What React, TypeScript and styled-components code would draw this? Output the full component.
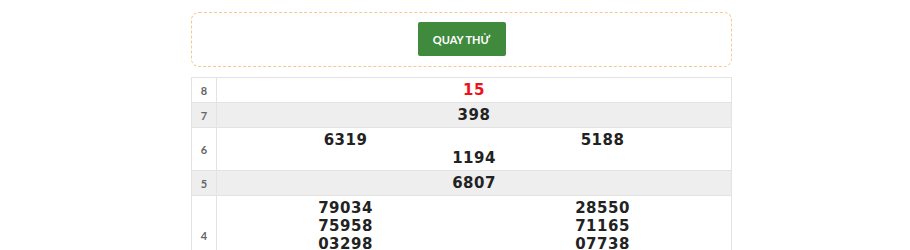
import React from 'react';
import styled, { createGlobalStyle } from 'styled-components';

const GlobalStyle = createGlobalStyle`
  html, body {
    margin: 0;
    padding: 0;
    background: #fff;
    font-family: Lato, "Liberation Sans", Arial, sans-serif;
  }
`;

const Page = styled.div`
  width: 541px;
  padding: 12px 0 0 191px;
`;

const SpinBox = styled.div`
  display: flex;
  justify-content: center;
  padding: 9px 0 10px;
  border: 1px dashed #f3c98c;
  border-radius: 8px;
  margin-bottom: 10px;
`;

const SpinButton = styled.button`
  width: 88px;
  height: 34px;
  border: none;
  border-radius: 2px;
  background: #3f8a3c;
  color: #fff;
  font-family: Lato, "Liberation Sans", Arial, sans-serif;
  font-weight: 700;
  font-size: 11px;
  cursor: pointer;
`;

const Table = styled.table`
  width: 100%;
  border-collapse: collapse;
  table-layout: fixed;
  border: 1px solid #e3e3e3;
`;

const Row = styled.tr<{ $shaded: boolean }>`
  background: ${(p) => (p.$shaded ? '#eeeeee' : '#fff')};
`;

const Label = styled.td`
  width: 24px;
  padding: 0;
  border: 1px solid #e3e3e3;
  text-align: center;
  vertical-align: middle;
  font-size: 11px;
  color: #666;
  font-weight: 700;
`;

const Cell = styled.td`
  border: 1px solid #e3e3e3;
  padding: 3px 0;
`;

const Numbers = styled.div`
  display: flex;
  flex-wrap: wrap;
  justify-content: center;
`;

const Num = styled.span<{ $half: boolean; $red: boolean }>`
  width: ${(p) => (p.$half ? '50%' : '100%')};
  text-align: center;
  font-family: "DejaVu Sans", Verdana, sans-serif;
  font-weight: 700;
  font-size: 15px;
  letter-spacing: 0.5px;
  line-height: 18px;
  color: ${(p) => (p.$red ? '#f0101a' : '#222')};
`;

const prizes = [
  { label: '8', nums: ['15'], red: true },
  { label: '7', nums: ['398'] },
  { label: '6', nums: ['6319', '5188', '1194'] },
  { label: '5', nums: ['6807'] },
  { label: '4', nums: ['79034', '28550', '75958', '71165', '03298', '07738', '45126'] },
];

export default function App() {
  return (
    <>
      <GlobalStyle />
      <Page>
        <SpinBox>
          <SpinButton>QUAY THỬ</SpinButton>
        </SpinBox>
        <Table>
          <tbody>
            {prizes.map((p, i) => (
              <Row key={p.label} $shaded={i % 2 === 1}>
                <Label>{p.label}</Label>
                <Cell>
                  <Numbers>
                    {p.nums.map((n) => (
                      <Num key={n} $half={p.nums.length > 1} $red={!!p.red}>
                        {n}
                      </Num>
                    ))}
                  </Numbers>
                </Cell>
              </Row>
            ))}
          </tbody>
        </Table>
      </Page>
    </>
  );
}
